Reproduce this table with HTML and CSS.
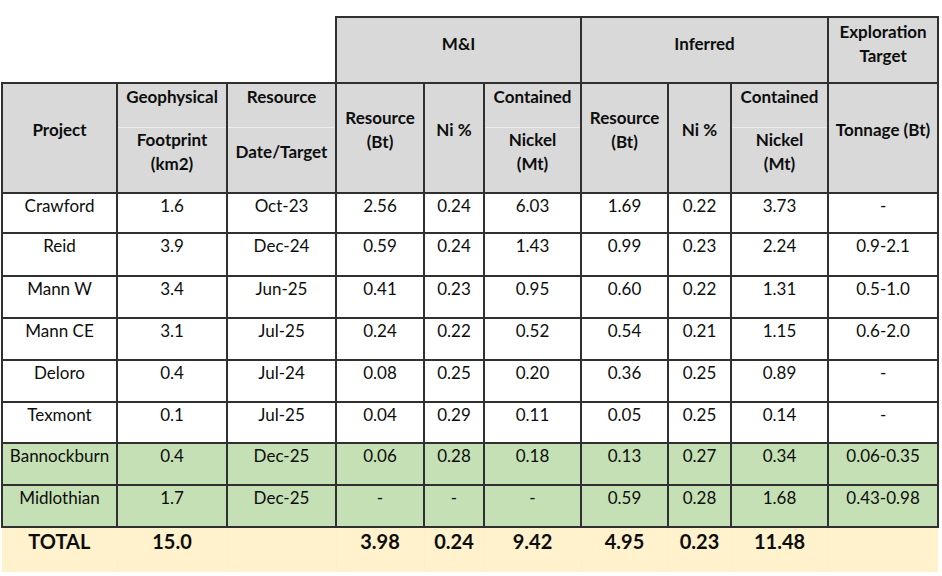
FILE: index.html
```html
<!DOCTYPE html>
<html lang="en">
<head>
<meta charset="utf-8">
<title>Nickel Resources</title>
<link rel="stylesheet" href="styles.css">
</head>
<body>
<div class="sheet">
<table class="res">
<colgroup>
<col class="c1"><col class="c2"><col class="c3"><col class="c4"><col class="c5">
<col class="c6"><col class="c7"><col class="c8"><col class="c9"><col class="c10">
</colgroup>
<thead>
<tr class="grp">
<th colspan="3" class="blank"></th>
<th colspan="3">M&amp;I</th>
<th colspan="3">Inferred</th>
<th>Exploration<br>Target</th>
</tr>
<tr class="suba">
<th rowspan="2" class="span">Project</th>
<th class="top">Geophysical</th>
<th class="top">Resource</th>
<th rowspan="2" class="span">Resource<br>(Bt)</th>
<th rowspan="2" class="span">Ni %</th>
<th class="top">Contained</th>
<th rowspan="2" class="span">Resource<br>(Bt)</th>
<th rowspan="2" class="span">Ni %</th>
<th class="top">Contained</th>
<th rowspan="2" class="span">Tonnage (Bt)</th>
</tr>
<tr class="subb">
<th class="bot">Footprint<br>(km2)</th>
<th class="bot">Date/Target</th>
<th class="bot">Nickel<br>(Mt)</th>
<th class="bot">Nickel<br>(Mt)</th>
</tr>
</thead>
<tbody>
<tr class="r1"><td>Crawford</td><td>1.6</td><td>Oct-23</td><td>2.56</td><td>0.24</td><td>6.03</td><td>1.69</td><td>0.22</td><td>3.73</td><td>-</td></tr>
<tr class="r2"><td>Reid</td><td>3.9</td><td>Dec-24</td><td>0.59</td><td>0.24</td><td>1.43</td><td>0.99</td><td>0.23</td><td>2.24</td><td>0.9-2.1</td></tr>
<tr><td>Mann W</td><td>3.4</td><td>Jun-25</td><td>0.41</td><td>0.23</td><td>0.95</td><td>0.60</td><td>0.22</td><td>1.31</td><td>0.5-1.0</td></tr>
<tr><td>Mann CE</td><td>3.1</td><td>Jul-25</td><td>0.24</td><td>0.22</td><td>0.52</td><td>0.54</td><td>0.21</td><td>1.15</td><td>0.6-2.0</td></tr>
<tr><td>Deloro</td><td>0.4</td><td>Jul-24</td><td>0.08</td><td>0.25</td><td>0.20</td><td>0.36</td><td>0.25</td><td>0.89</td><td>-</td></tr>
<tr class="r6"><td>Texmont</td><td>0.1</td><td>Jul-25</td><td>0.04</td><td>0.29</td><td>0.11</td><td>0.05</td><td>0.25</td><td>0.14</td><td>-</td></tr>
<tr class="green"><td>Bannockburn</td><td>0.4</td><td>Dec-25</td><td>0.06</td><td>0.28</td><td>0.18</td><td>0.13</td><td>0.27</td><td>0.34</td><td>0.06-0.35</td></tr>
<tr class="green"><td>Midlothian</td><td>1.7</td><td>Dec-25</td><td>-</td><td>-</td><td>-</td><td>0.59</td><td>0.28</td><td>1.68</td><td>0.43-0.98</td></tr>
<tr class="total"><td>TOTAL</td><td>15.0</td><td></td><td>3.98</td><td>0.24</td><td>9.42</td><td>4.95</td><td>0.23</td><td>11.48</td><td></td></tr>
</tbody>
</table>
</div>
</body>
</html>
```
FILE: styles.css
```css
html, body {
  margin: 0;
  background: #ffffff;
}

body {
  font-family: Lato, "Open Sans", "Liberation Sans", sans-serif;
  color: #0d0d0d;
}

.sheet {
  padding: 16px 0 0 1px;
}

.res {
  border-collapse: collapse;
  table-layout: fixed;
  width: 938px;
  font-size: 17px;
  line-height: 24px;
}

.c1 { width: 115px; }
.c2 { width: 110px; }
.c3 { width: 109px; }
.c4 { width: 88px; }
.c5 { width: 60px; }
.c6 { width: 97px; }
.c7 { width: 87px; }
.c8 { width: 63px; }
.c9 { width: 97px; }
.c10 { width: 110px; }

.res th,
.res td {
  border: 2px solid #303030;
  padding: 0;
  text-align: center;
  white-space: nowrap;
}

.res th {
  background: #d9d9d9;
  font-weight: 700;
}

.grp th {
  height: 66px;
  vertical-align: middle;
  padding-bottom: 13px;
  box-sizing: border-box;
}

.grp th.blank {
  background: #ffffff;
  border: none;
}

.suba th {
  height: 44px;
  box-sizing: border-box;
}

.suba th.top {
  vertical-align: top;
  padding-top: 1px;
  border-bottom: 1px solid #ececec;
}

.suba th.span {
  vertical-align: middle;
  padding-bottom: 15px;
}

.subb th {
  height: 65px;
  box-sizing: border-box;
}

.subb th.bot {
  vertical-align: middle;
  padding-bottom: 16px;
  border-top: 1px solid #ececec;
}

.res td {
  height: 42px;
  box-sizing: border-box;
  vertical-align: top;
  padding-top: 0;
}

.res .r1 td { height: 40px; }
.res .r2 td { height: 43px; }
.res .r6 td { height: 41px; }

.green td {
  background: #c5e0b4;
}

.total td {
  background: #fff2cc;
  border: none;
  border-left: 1px solid #fbefd0;
  height: 45px;
  padding-top: 1px;
  font-weight: 700;
  font-size: 20px;
}

.total td:first-child {
  border-left: none;
}
```
